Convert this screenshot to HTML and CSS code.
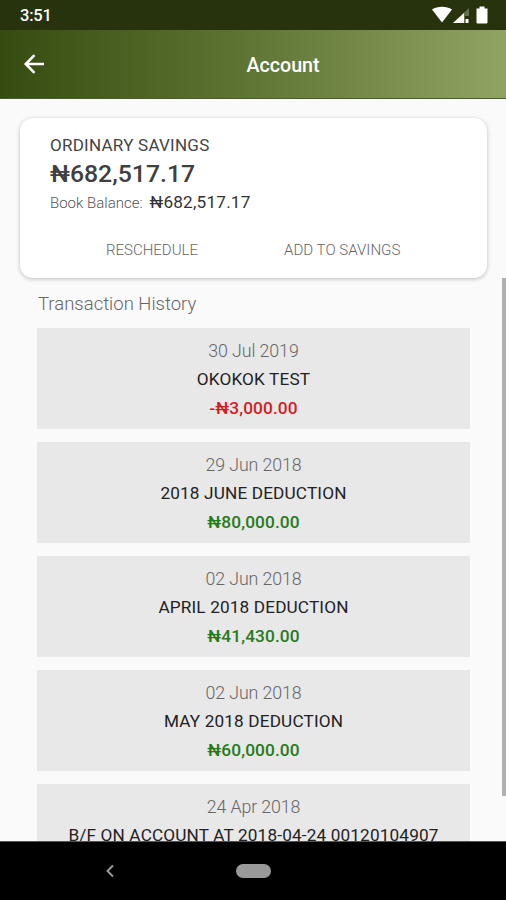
FILE: index.html
```html
<!DOCTYPE html>
<html lang="en">
<head>
<meta charset="utf-8">
<title>Account</title>
<link rel="stylesheet" href="styles.css">
</head>
<body>
<div class="screen">
  <div class="status">
    <span class="clock">3:51</span>
    <svg class="indicators" width="58" height="20" viewBox="0 0 58 20">
      <path d="M0 4.500C5.500 .8 14.500 .8 20 4.500L10 17.500z" fill="#fff"/>
      <path d="M37 3v8h-4v7H21z" fill="#65704d"/>
      <path d="M32 8v10H21z" fill="#fff"/>
      <path d="M33.500 14h3v4h-3z" fill="#fff"/>
      <path d="M47.500 1.500h5v2h3V17.500q0 1-1 1h-9q-1 0-1-1V3.500h3z" fill="#fff"/>
    </svg>
  </div>
  <header class="header">
    <svg class="back" width="22" height="20" viewBox="0 0 22 20" fill="none" stroke="#fff" stroke-width="2.500"><path d="M21 10H3M11.500 1.200L2.700 10l8.800 8.800"/></svg>
    <h1 class="title">Account</h1>
  </header>
  <main class="content">
    <section class="card">
      <div class="name">ORDINARY SAVINGS</div>
      <div class="balance">₦682,517.17</div>
      <div class="book"><span class="book-label">Book Balance:</span><span class="book-value">₦682,517.17</span></div>
      <div class="actions"><span class="reschedule">RESCHEDULE</span><span class="add">ADD TO SAVINGS</span></div>
    </section>
    <h2 class="heading">Transaction History</h2>
    <div class="list">
      <div class="item"><div class="date">30 Jul 2019</div><div class="desc">OKOKOK TEST</div><div class="amount debit">-₦3,000.00</div></div>
      <div class="item"><div class="date">29 Jun 2018</div><div class="desc">2018 JUNE DEDUCTION</div><div class="amount">₦80,000.00</div></div>
      <div class="item"><div class="date">02 Jun 2018</div><div class="desc">APRIL 2018 DEDUCTION</div><div class="amount">₦41,430.00</div></div>
      <div class="item"><div class="date">02 Jun 2018</div><div class="desc">MAY 2018 DEDUCTION</div><div class="amount">₦60,000.00</div></div>
      <div class="item"><div class="date">24 Apr 2018</div><div class="desc">B/F ON ACCOUNT AT 2018-04-24 00120104907</div></div>
    </div>
    <div class="scrollbar"></div>
  </main>
  <nav class="nav">
    <svg class="nav-back" width="10" height="14" viewBox="0 0 10 14" fill="none" stroke="#999" stroke-width="2"><path d="M8 1.500L2.500 7 8 12.500"/></svg>
    <span class="pill"></span>
  </nav>
</div>
</body>
</html>
```

FILE: styles.css
```css
* { box-sizing: border-box; }
body { margin: 0; font-family: Roboto, "Noto Sans", sans-serif; }
.screen { width: 506px; height: 900px; display: flex; flex-direction: column; overflow: hidden; background: #fafafa; }
.status { height: 30px; flex: none; background: #26330c; display: flex; justify-content: space-between; padding: 5px 16px 0 20px; color: #fff; }
.clock { font-size: 16.500px; line-height: 21px; font-weight: 500; letter-spacing: -.2px; }
.header { height: 69px; flex: none; display: grid; grid-template-columns: 60px 1fr; align-items: center; background: linear-gradient(90deg, #364b10, #607634 50%, #90a363); border-bottom: 1px solid #47612a; }
.back { margin-left: 23px; }
.title { margin: 4px 0 0; text-align: center; color: #fff; font-size: 19.700px; line-height: 24px; font-weight: 500; }
.content { flex: 1; min-height: 0; overflow: hidden; position: relative; padding: 19px 19px 0 20px; }
.card { height: 160px; border-radius: 13px; background: #fff; box-shadow: 0 1px 4px rgba(0,0,0,.25); padding: 15px 30px 0; white-space: nowrap; }
.name { font-size: 17px; line-height: 24px; letter-spacing: .25px; color: #444; }
.balance { font-size: 24.800px; line-height: 34px; font-weight: 500; color: #404040; }
.book { display: flex; gap: 7px; line-height: 22px; align-items: baseline; }
.book-label { font-size: 15px; font-weight: 300; color: #555; }
.book-value { font-size: 17.200px; letter-spacing: .2px; color: #333; }
.actions { display: flex; gap: 86px; padding: 25px 0 0 56px; font-size: 15px; line-height: 22px; font-weight: 300; color: #666; }
.add { font-size: 15.100px; }
.heading { margin: 14px 0 0 18px; font-size: 18.500px; line-height: 24px; font-weight: 300; color: #666; }
.list { margin: 12px -1px 0 17px; width: 433px; display: flex; flex-direction: column; gap: 13px; }
.item { height: 101px; flex: none; background: #e8e8e8; text-align: center; padding-top: 8px; line-height: 29px; white-space: nowrap; }
.date { font-size: 17.800px; letter-spacing: -.1px; font-weight: 300; color: #666; }
.desc { font-size: 17.200px; letter-spacing: .15px; color: #222; }
.amount { font-size: 17.300px; letter-spacing: .1px; font-weight: 500; color: #277a18; }
.debit { color: #d61a1f; }
.scrollbar { position: absolute; right: 0; top: 179px; width: 4px; height: 518px; background: #b0b0b0; }
.nav { height: 59px; flex: none; background: #000; border-top: 1px solid #555; display: flex; align-items: center; padding-left: 105px; }
.pill { width: 35px; height: 14px; margin-left: 121px; border-radius: 7px; background: #999; }
```
